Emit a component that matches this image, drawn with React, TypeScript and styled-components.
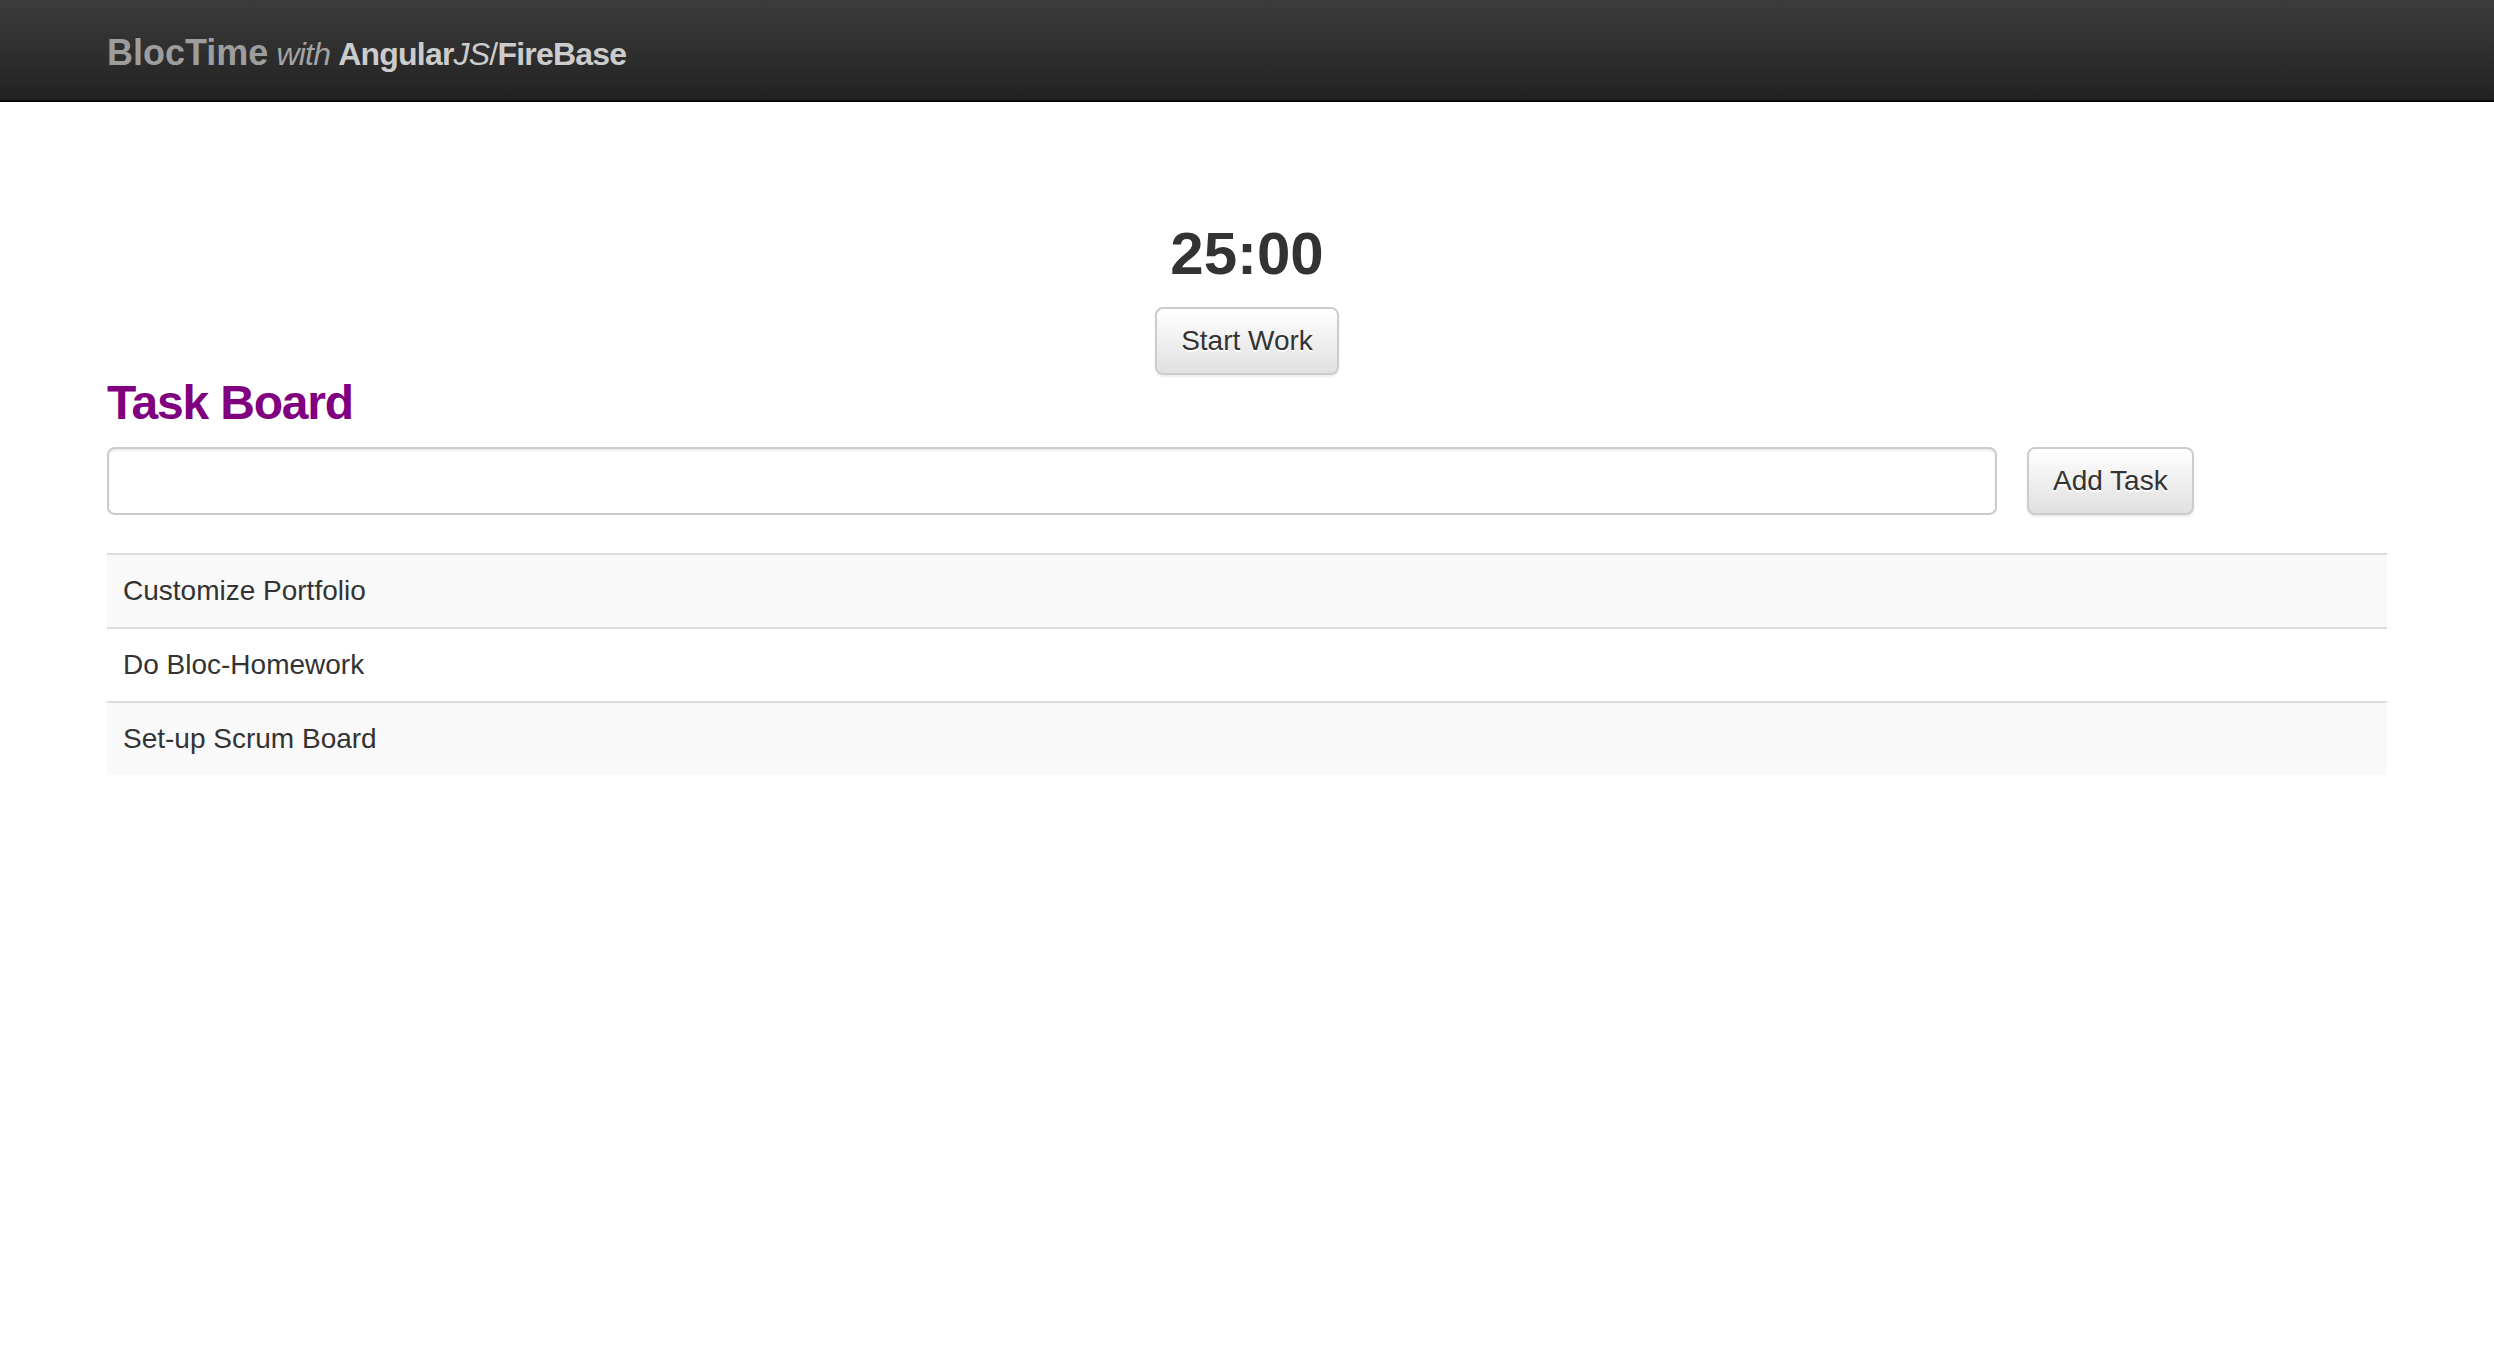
import React from "react";
import styled, { createGlobalStyle } from "styled-components";

const GlobalStyle = createGlobalStyle`
  html, body {
    margin: 0;
    padding: 0;
    background: #ffffff;
  }
  body {
    font-family: "Liberation Sans", Arial, Helvetica, sans-serif;
    font-size: 28px;
    line-height: 40px;
    color: #333333;
  }
  * { box-sizing: border-box; }
`;

const Navbar = styled.header`
  height: 102px;
  background: linear-gradient(to bottom, #3c3c3c 0%, #222222 100%);
  border-bottom: 2px solid #080808;
`;

const Container = styled.div`
  width: 2280px;
  margin: 0 auto;
`;

const Brand = styled.div`
  padding-top: 33px;
  font-size: 36px;
  line-height: 40px;
  white-space: nowrap;
`;

const BrandPart = styled.span<{ $bold?: boolean; $italic?: boolean; $tone?: string; $small?: boolean }>`
  font-weight: ${(p) => (p.$bold ? 700 : 400)};
  font-style: ${(p) => (p.$italic ? "italic" : "normal")};
  font-size: ${(p) => (p.$small ? "32px" : "36px")};
  letter-spacing: ${(p) => (p.$small ? "-0.8px" : "0")};
  color: ${(p) => p.$tone || "#9d9d9d"};
`;

const TimerSection = styled.section`
  text-align: center;
`;

const TimerDisplay = styled.h2`
  margin: 119px 0 20px;
  font-size: 60px;
  line-height: 66px;
  font-weight: 700;
  color: #333333;
`;

const Button = styled.button`
  display: inline-block;
  height: 68px;
  padding: 0 24px;
  font-family: "Liberation Sans", Arial, Helvetica, sans-serif;
  font-size: 28px;
  line-height: 40px;
  color: #333333;
  background: linear-gradient(to bottom, #ffffff 0%, #e0e0e0 100%);
  border: 2px solid #cccccc;
  border-radius: 8px;
  text-shadow: 0 2px 0 #ffffff;
  box-shadow: inset 0 2px 0 rgba(255, 255, 255, 0.15), 0 2px 2px rgba(0, 0, 0, 0.075);
  cursor: pointer;
  white-space: nowrap;
`;

const BoardTitle = styled.h3`
  margin: 1px 0 18px;
  font-size: 48px;
  line-height: 53px;
  font-weight: 700;
  letter-spacing: -1.2px;
  color: #800080;
`;

const AddRow = styled.div`
  display: flex;
  align-items: flex-start;
  gap: 30px;
`;

const TaskInput = styled.input`
  width: 1890px;
  height: 68px;
  padding: 12px 24px;
  font-family: "Liberation Sans", Arial, Helvetica, sans-serif;
  font-size: 28px;
  color: #555555;
  background: #ffffff;
  border: 2px solid #cccccc;
  border-radius: 8px;
  box-shadow: inset 0 2px 2px rgba(0, 0, 0, 0.075);
  outline: none;
`;

const TaskTable = styled.div`
  margin-top: 38px;
  display: flex;
  flex-direction: column;
`;

const TaskRow = styled.div<{ $striped: boolean }>`
  padding: 16px;
  border-top: 2px solid #dddddd;
  background: ${(p) => (p.$striped ? "#f9f9f9" : "#ffffff")};
  font-size: 28px;
  line-height: 40px;
  color: #333333;
`;

const tasks = ["Customize Portfolio", "Do Bloc-Homework", "Set-up Scrum Board"];

export default function App() {
  return (
    <>
      <GlobalStyle />
      <Navbar>
        <Container>
          <Brand>
            <BrandPart $bold>BlocTime</BrandPart>
            <BrandPart $italic $small $tone="#a3a3a3"> with </BrandPart>
            <BrandPart $bold $small $tone="#cccccc">Angular</BrandPart>
            <BrandPart $italic $small $tone="#cccccc">JS</BrandPart>
            <BrandPart $small $tone="#cccccc">/</BrandPart>
            <BrandPart $bold $small $tone="#cccccc">FireBase</BrandPart>
          </Brand>
        </Container>
      </Navbar>
      <Container>
        <TimerSection>
          <TimerDisplay>25:00</TimerDisplay>
          <Button type="button">Start Work</Button>
        </TimerSection>
        <BoardTitle>Task Board</BoardTitle>
        <AddRow>
          <TaskInput type="text" />
          <Button type="button">Add Task</Button>
        </AddRow>
        <TaskTable>
          {tasks.map((t, i) => (
            <TaskRow key={t} $striped={i % 2 === 0}>
              {t}
            </TaskRow>
          ))}
        </TaskTable>
      </Container>
    </>
  );
}
